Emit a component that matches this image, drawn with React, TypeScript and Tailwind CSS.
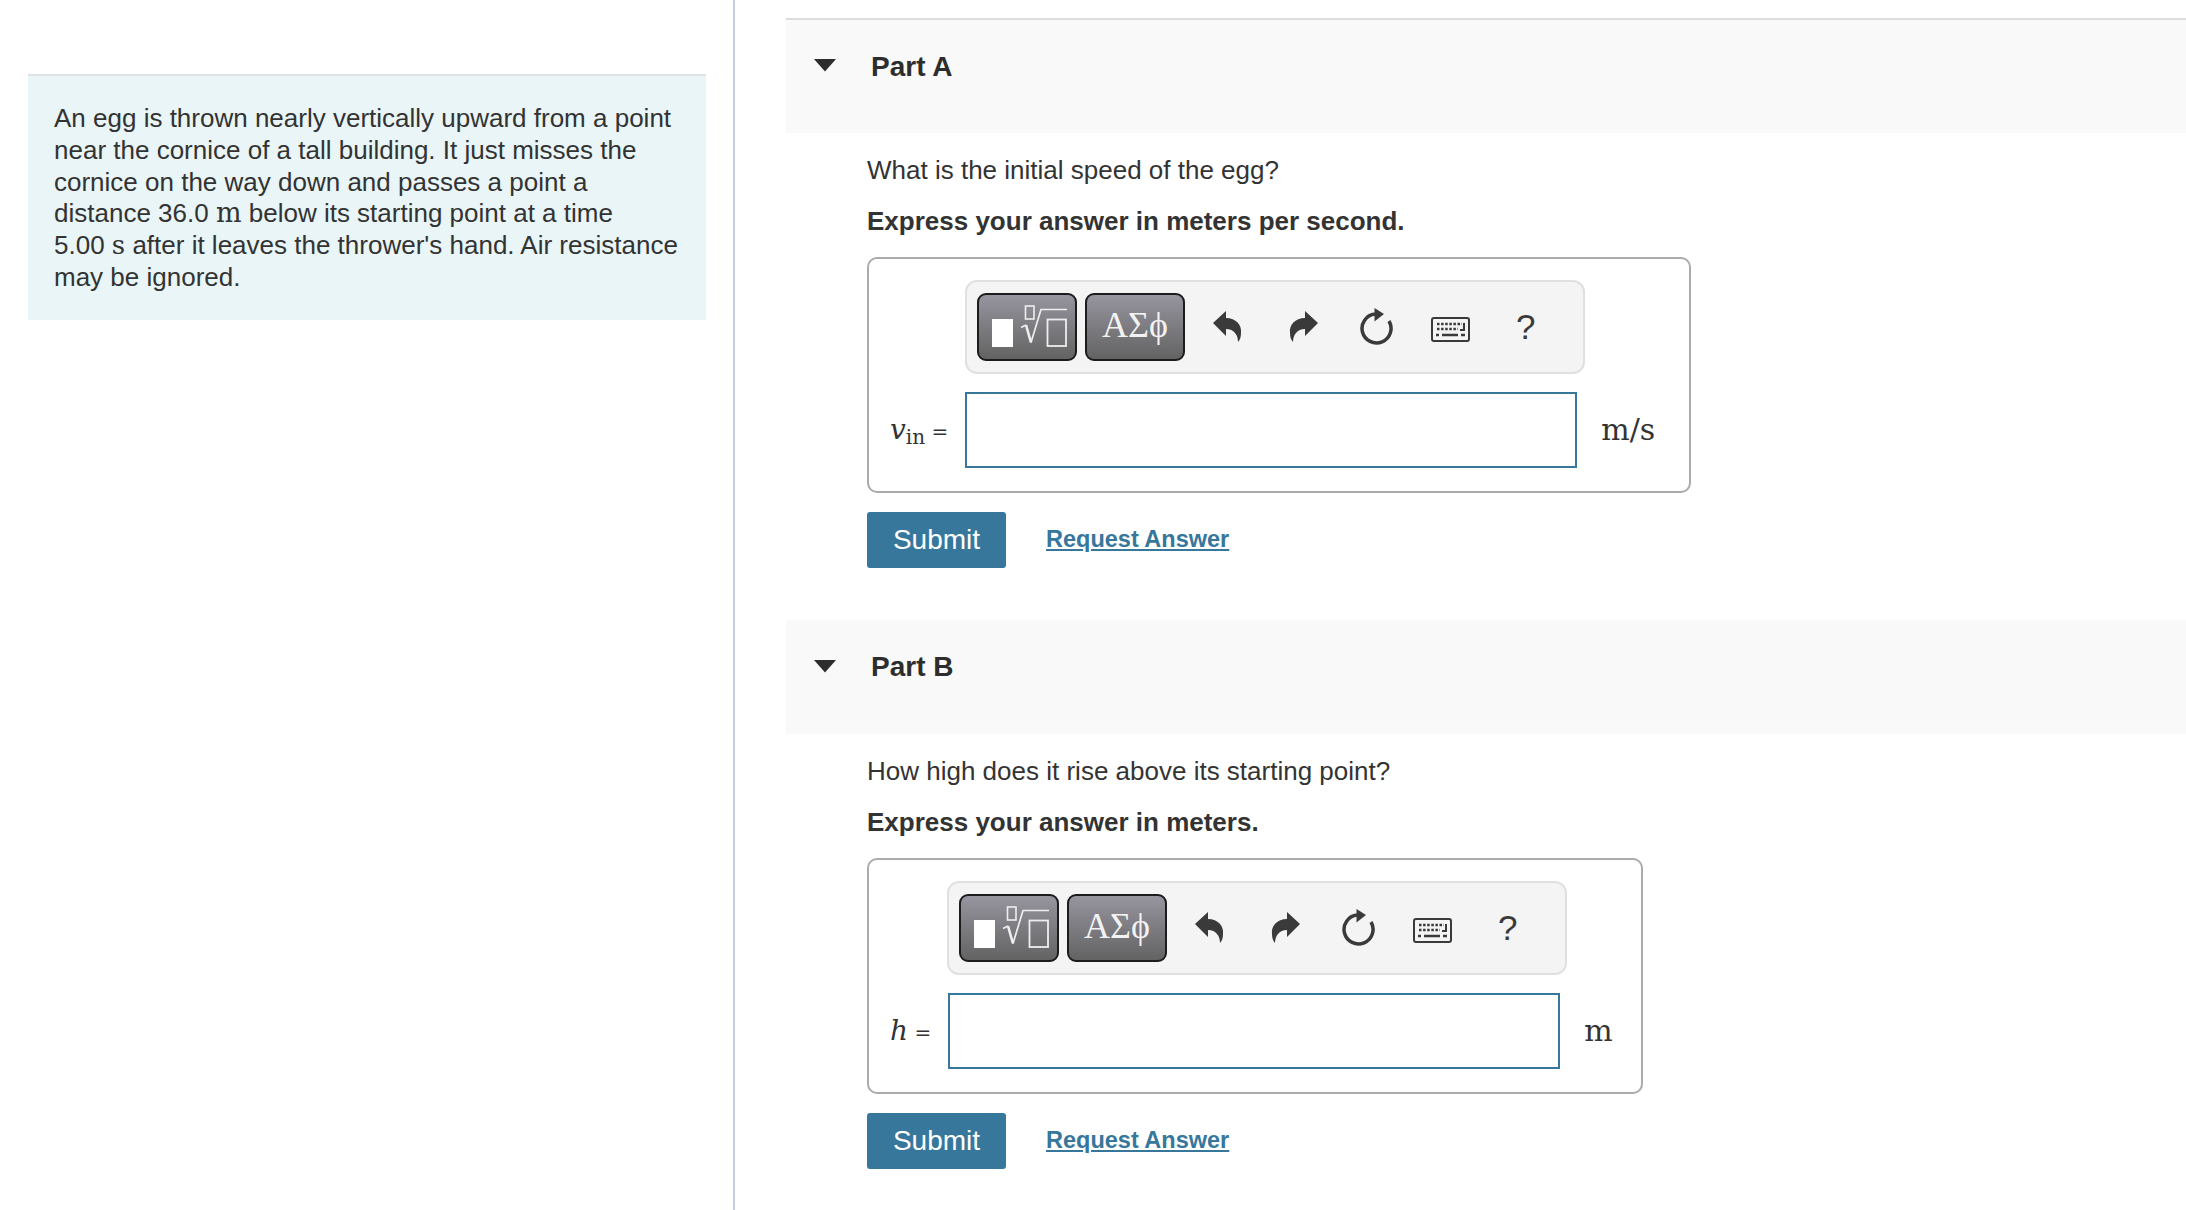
const sans = { fontFamily: '"Liberation Sans", Arial, sans-serif' };
const mathSerif = { fontFamily: '"DejaVu Serif", serif' };

function TemplatesIcon() {
  return (
    <svg width="96" height="64" viewBox="2 2 96 64" fill="none">
      <rect x="15" y="26" width="21" height="28" fill="#fff" />
      <rect x="48.5" y="13" width="8.5" height="13" stroke="#eee" strokeWidth="1.6" />
      <path d="M44 34.5 L49 32" stroke="#eee" strokeWidth="1.6" />
      <path d="M49 32 L54 49.5" stroke="#eee" strokeWidth="2.6" />
      <path d="M54 49.5 L64 16.5 H90" stroke="#eee" strokeWidth="1.7" />
      <rect x="70.5" y="26.5" width="18.5" height="26.5" stroke="#eee" strokeWidth="1.8" />
    </svg>
  );
}

function Toolbar() {
  return (
    <div className="w-[620px] h-[94px] rounded-[12px] border-2 border-[#e0e0e0] bg-[#f4f4f4] flex items-center pl-[10px]">
      <button className="w-[100px] h-[68px] rounded-[9px] border-2 border-[#1c1c1c] bg-gradient-to-b from-[#97959f] to-[#636363] flex items-center justify-center">
        <TemplatesIcon />
      </button>
      <button
        className="ml-[8px] w-[100px] h-[68px] rounded-[9px] border-2 border-[#1c1c1c] bg-gradient-to-b from-[#97959f] to-[#636363] text-[#f2f2f2] text-[36px] leading-none flex items-center justify-center pb-[5px]"
        style={{ fontFamily: '"Liberation Serif", serif' }}
      >
        ΑΣϕ
      </button>
      <svg className="ml-[27px] mb-[2px]" width="30" height="34" viewBox="0 0 30 34" fill="#3a3a3a">
        <path d="M1 14 L14 2 V9 C24 9 30 16 29 24 C29 28 28 31 26 33 C26 26 22 20 14 20 V27 Z" />
      </svg>
      <svg className="ml-[47px] mb-[2px]" width="30" height="34" viewBox="0 0 30 34" fill="#3a3a3a">
        <path d="M29 14 L16 2 V9 C6 9 0 16 1 24 C1 28 2 31 4 33 C4 26 8 20 16 20 V27 Z" />
      </svg>
      <svg className="ml-[41px]" width="34" height="38" viewBox="0 0 34 38" fill="none">
        <path d="M15 6 A14.5 14.5 0 1 0 29 13" stroke="#3a3a3a" strokeWidth="3.5" />
        <path d="M14.5 0 L24 6 L14.5 13.5 Z" fill="#3a3a3a" />
      </svg>
      <svg className="ml-[37px] mt-[4px]" width="39" height="25" viewBox="0 0 39 25" fill="none">
        <rect x="1" y="1" width="37" height="23" rx="2" stroke="#3a3a3a" strokeWidth="2" />
        <path d="M6 7 H31" stroke="#3a3a3a" strokeWidth="2.5" strokeDasharray="2.5 1.6" />
        <path d="M6 12 H27" stroke="#3a3a3a" strokeWidth="2.5" strokeDasharray="2.5 1.6" />
        <path d="M33 6 V13 H29" stroke="#3a3a3a" strokeWidth="2" />
        <path d="M5 18 H8 M11 18 H27 M30 18 H34" stroke="#3a3a3a" strokeWidth="2.5" />
      </svg>
      <span className="ml-[46px] mb-[2px] text-[35px] leading-none text-[#3a3a3a]" style={sans}>
        ?
      </span>
    </div>
  );
}

interface AnswerBoxProps {
  width: string;
  barIndent: string;
  label: React.ReactNode;
  unit: string;
}

function AnswerBox({ width, barIndent, label, unit }: AnswerBoxProps) {
  return (
    <div className={`${width} h-[236px] rounded-[10px] border-2 border-[#ababab] bg-white`}>
      <div className={`pt-[21px] ${barIndent}`}>
        <Toolbar />
      </div>
      <div className="mt-[18px] flex items-center pl-[21px]" style={mathSerif}>
        <span className="text-[20px] leading-none text-[#333] whitespace-nowrap">{label}</span>
        <div className="ml-[17px] w-[612px] h-[76px] border-2 border-[#37779b] bg-white" />
        <span className="ml-[24px] text-[30px] leading-none text-[#333]">{unit}</span>
      </div>
    </div>
  );
}

interface PartProps {
  title: string;
  question: string;
  instruction: string;
  headerHeight: string;
  topBorder?: boolean;
  box: React.ReactNode;
}

function Part({ title, question, instruction, headerHeight, topBorder, box }: PartProps) {
  return (
    <section>
      <div className={`${headerHeight} pb-[20px] bg-[#f9f9f9] flex items-center ${topBorder ? 'border-t-2 border-[#dcdcdc]' : ''}`}>
        <svg className="ml-[28px] mb-[2px]" width="22" height="13" viewBox="0 0 22 13" fill="#2d2d2d">
          <path d="M0 0 H22 L11 12.5 Z" />
        </svg>
        <h2 className="ml-[35px] text-[28px] font-bold text-[#2d2d2d] leading-none">{title}</h2>
      </div>
      <div className="pl-[81px]">
        <p className="mt-[21px] text-[26px] leading-[32px] text-[#333]">{question}</p>
        <p className="mt-[19px] text-[26px] leading-[32px] font-bold text-[#333]">{instruction}</p>
        <div className="mt-[20px]">{box}</div>
        <div className="mt-[19px] flex items-center">
          <button className="w-[139px] h-[56px] rounded-[3px] bg-[#37779b] text-white text-[28px]">Submit</button>
          <a className="ml-[40px] text-[23.5px] font-bold text-[#37779b] underline">Request Answer</a>
        </div>
      </div>
    </section>
  );
}

export default function App() {
  return (
    <div className="w-[2186px] h-[1210px] overflow-hidden bg-white flex" style={sans}>
      <aside className="w-[735px] shrink-0 border-r-2 border-[#c3cfe0] pl-[28px] pt-[74px]">
        <div className="w-[678px] h-[246px] bg-[#e9f5f7] border-t-2 border-[#dfe3e5] pl-[26px] pt-[27px] text-[26px] leading-[31.8px] text-[#333]">
          An egg is thrown nearly vertically upward from a point
          <br />
          near the cornice of a tall building. It just misses the
          <br />
          cornice on the way down and passes a point a
          <br />
          distance 36.0 <span className="text-[27px] leading-none" style={mathSerif}>m</span> below its starting point at a time
          <br />
          5.00 <span className="leading-none" style={mathSerif}>s</span> after it leaves the thrower's hand. Air resistance
          <br />
          may be ignored.
        </div>
      </aside>
      <main className="flex-1 pl-[51px] pt-[18px]">
        <Part
          title="Part A"
          question="What is the initial speed of the egg?"
          instruction="Express your answer in meters per second."
          headerHeight="h-[115px]"
          topBorder
          box={
            <AnswerBox
              width="w-[824px]"
              barIndent="pl-[96px]"
              unit="m/s"
              label={
                <>
                  <i className="text-[28px]">v</i>
                  <sub className="text-[20px]">in</sub> =
                </>
              }
            />
          }
        />
        <div className="h-[52px]" />
        <Part
          title="Part B"
          question="How high does it rise above its starting point?"
          instruction="Express your answer in meters."
          headerHeight="h-[114px]"
          box={
            <AnswerBox
              width="w-[776px]"
              barIndent="pl-[78px]"
              unit="m"
              label={
                <>
                  <i className="text-[28px]">h</i> =
                </>
              }
            />
          }
        />
      </main>
    </div>
  );
}
